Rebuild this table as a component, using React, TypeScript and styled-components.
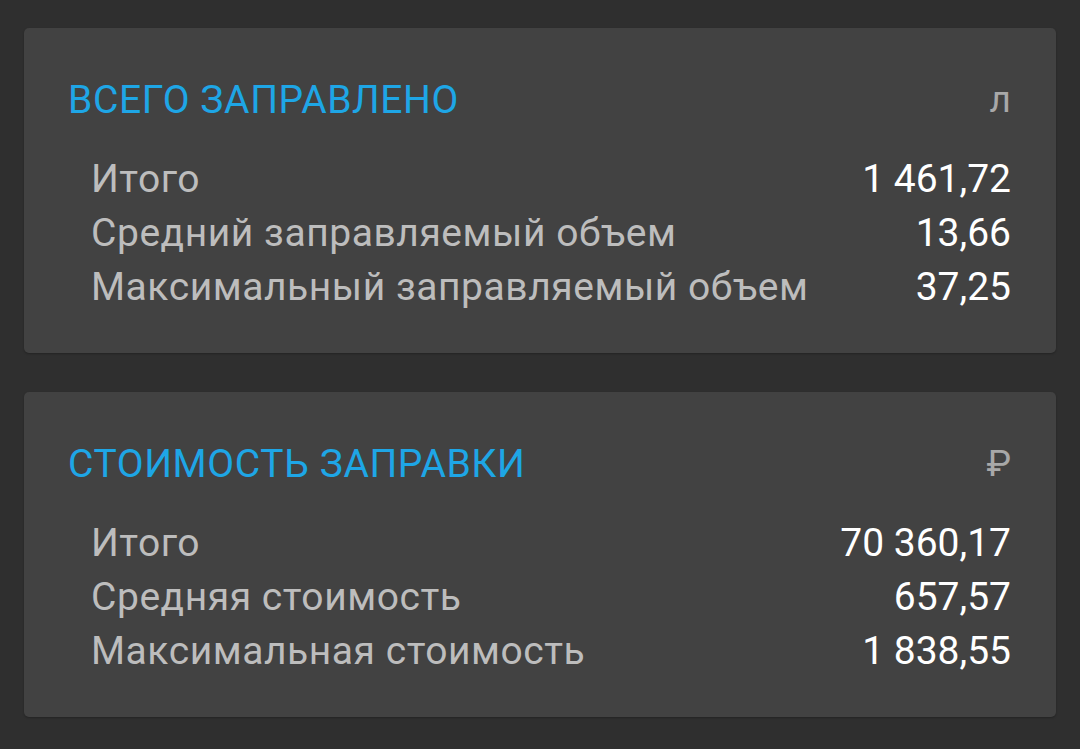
import React from 'react';
import styled, { createGlobalStyle } from 'styled-components';

const GlobalStyle = createGlobalStyle`
  html, body {
    margin: 0;
    padding: 0;
    background: #2f2f2f;
    font-family: Roboto, "Noto Sans", sans-serif;
  }
`;

const Page = styled.div`
  min-height: 749px;
  padding: 28px 24px;
  display: flex;
  flex-direction: column;
  gap: 39px;
  box-sizing: border-box;
`;

const Card = styled.section`
  background: #424242;
  border-radius: 5px;
  padding: 48px 45px 39px 44px;
  box-shadow: 0 1px 2px rgba(0, 0, 0, 0.25);
`;

const Header = styled.div`
  display: flex;
  align-items: center;
  justify-content: space-between;
  height: 48px;
  margin-bottom: 28px;
`;

const Title = styled.h2`
  margin: 0;
  font-weight: 400;
  font-size: 39px;
  letter-spacing: 0.6px;
  line-height: 48px;
  color: #1ea6e6;
`;

const Unit = styled.span`
  font-size: 37px;
  line-height: 48px;
  color: #a8a8a8;
`;

const Rows = styled.div`
  padding-left: 23px;
`;

const Row = styled.div`
  display: flex;
  justify-content: space-between;
  font-size: 39px;
  line-height: 54px;
`;

const Label = styled.span`
  color: #bdbdbd;
  letter-spacing: 0.55px;
`;

const Value = styled.span`
  color: #ffffff;
`;

type Stat = { label: string; value: string };

const sections: { title: string; unit: string; rows: Stat[] }[] = [
  {
    title: 'ВСЕГО ЗАПРАВЛЕНО',
    unit: 'л',
    rows: [
      { label: 'Итого', value: '1 461,72' },
      { label: 'Средний заправляемый объем', value: '13,66' },
      { label: 'Максимальный заправляемый объем', value: '37,25' },
    ],
  },
  {
    title: 'СТОИМОСТЬ ЗАПРАВКИ',
    unit: '₽',
    rows: [
      { label: 'Итого', value: '70 360,17' },
      { label: 'Средняя стоимость', value: '657,57' },
      { label: 'Максимальная стоимость', value: '1 838,55' },
    ],
  },
];

export default function App() {
  return (
    <>
      <GlobalStyle />
      <Page>
        {sections.map(s => (
          <Card key={s.title}>
            <Header>
              <Title>{s.title}</Title>
              <Unit>{s.unit}</Unit>
            </Header>
            <Rows>
              {s.rows.map(r => (
                <Row key={r.label}>
                  <Label>{r.label}</Label>
                  <Value>{r.value}</Value>
                </Row>
              ))}
            </Rows>
          </Card>
        ))}
      </Page>
    </>
  );
}
